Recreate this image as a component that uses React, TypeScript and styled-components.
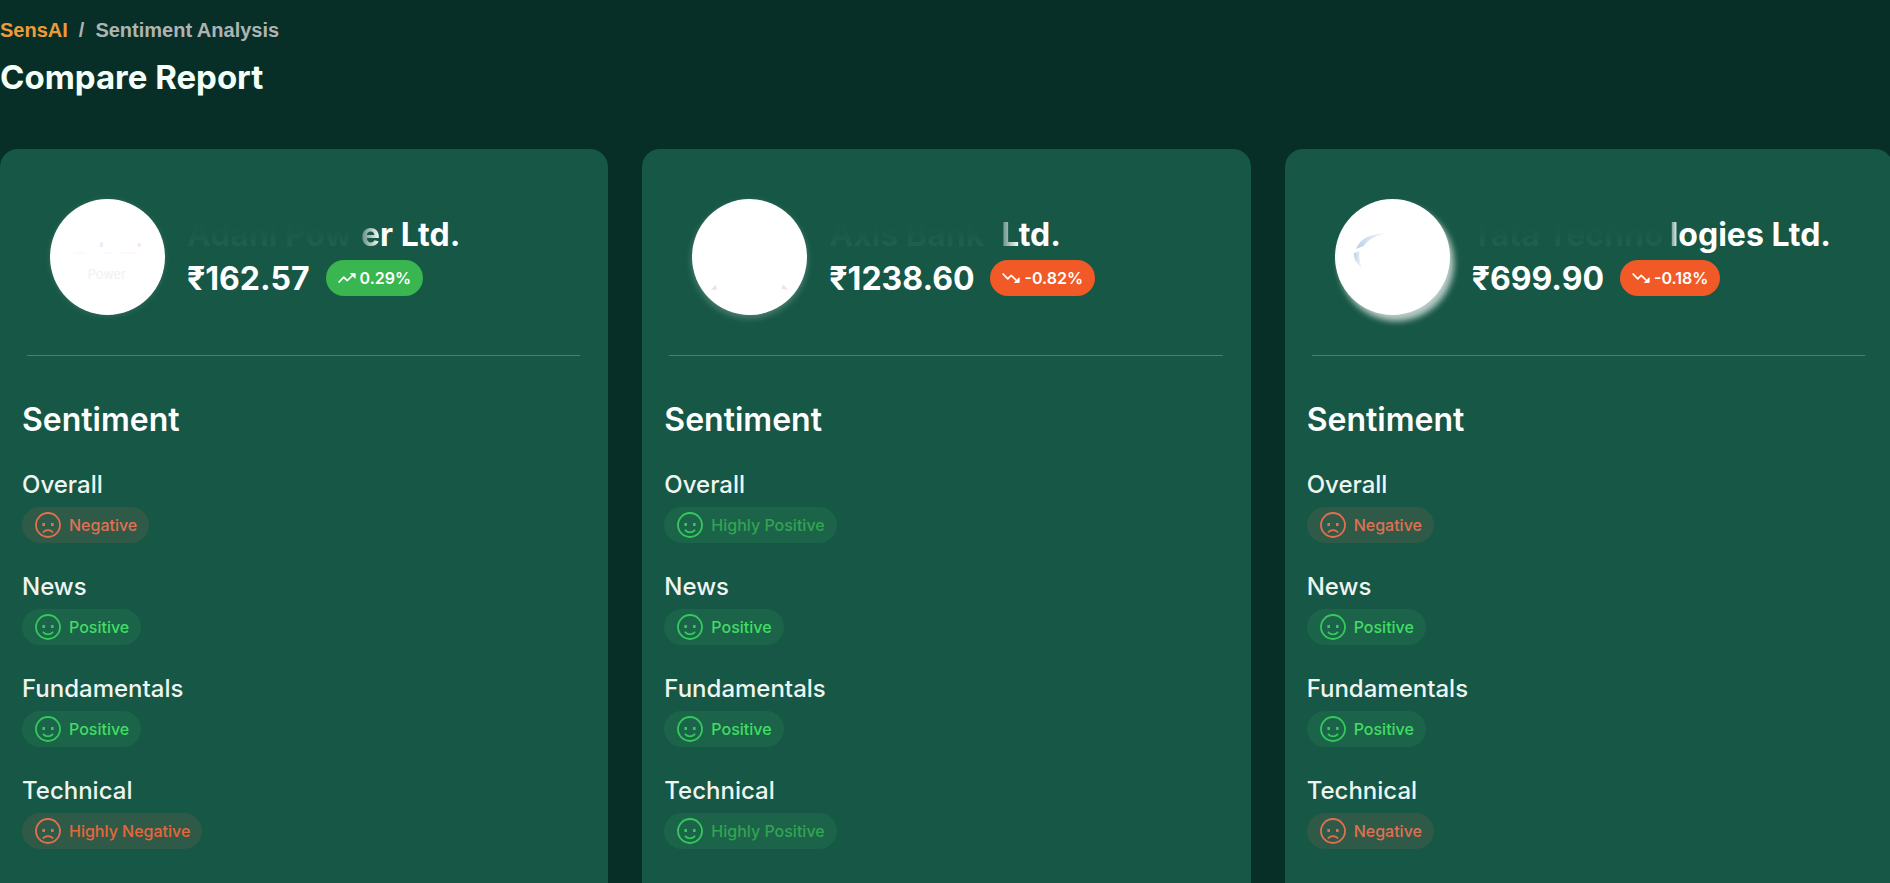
import React from "react";
import styled, { createGlobalStyle } from "styled-components";

const GlobalStyle = createGlobalStyle`
  *, *::before, *::after { box-sizing: border-box; }
  body {
    margin: 0;
    min-height: 100vh;
    background: #082f27;
    color: #ffffff;
    font-family: Inter, "Liberation Sans", sans-serif;
    overflow-x: hidden;
  }
  h1, h2, h3, p, dl, dd { margin: 0; }
`;

type Mood = "Highly Positive" | "Positive" | "Negative" | "Highly Negative";

const moodColors: Record<Mood, string> = {
  "Highly Positive": "#33a352",
  Positive: "#43dc64",
  Negative: "#df7153",
  "Highly Negative": "#e5673a",
};

const Page = styled.main`
  height: 100vh;
  overflow: hidden;
`;

const Breadcrumb = styled.nav`
  display: flex;
  gap: 11px;
  padding-top: 18px;
  font: bold 20px/24px "Liberation Sans", Arial, sans-serif;
  color: #aeb4b1;
`;

const Crumb = styled.a<{ $accent?: boolean }>`
  color: ${(p) => (p.$accent ? "#f09a38" : "inherit")};
  text-decoration: none;
`;

const Title = styled.h1`
  padding-top: 15px;
  font-size: 33px;
  font-weight: 700;
  line-height: 40px;
  color: #f3fff8;
`;

const Grid = styled.div`
  display: grid;
  grid-template-columns: repeat(3, minmax(0, 1fr));
  gap: 34px;
  margin: 52px -3px 0 0;
`;

const Card = styled.article`
  min-height: 760px;
  padding: 50px 28px 40px 22px;
  border-radius: 18px;
  background: #165745;
`;

const Header = styled.header`
  display: flex;
  align-items: center;
  gap: 22px;
  padding: 0 0 40px 28px;
  white-space: nowrap;
`;

const Logo = styled.div<{ $glow: string }>`
  flex: none;
  width: 115px;
  height: 116px;
  border-radius: 50%;
  background: #ffffff;
  box-shadow: ${(p) => p.$glow};
  overflow: hidden;

  svg { display: block; }
`;

const Name = styled.h2`
  font-size: 32px;
  font-weight: 700;
  line-height: 44px;
`;

const Faded = styled.span<{ $width: number }>`
  display: inline-block;
  width: ${(p) => p.$width}px;
  background: linear-gradient(rgba(255, 255, 255, 0.01) 40%, rgba(255, 255, 255, 0.06) 80%);
  background-clip: text;
  color: transparent;
`;

const Dim = styled.span`
  background: linear-gradient(90deg, rgba(255, 255, 255, 0.3), #ffffff);
  background-clip: text;
  color: transparent;
`;

const Quote = styled.div`
  display: flex;
  align-items: center;
  gap: 16px;
`;

const Price = styled.p`
  font-size: 32px;
  font-weight: 700;
  line-height: 44px;
`;

const Change = styled.span<{ $up: boolean }>`
  display: flex;
  align-items: center;
  gap: 4px;
  height: 36px;
  margin-bottom: 2px;
  padding: 0 12px;
  border-radius: 18px;
  background: ${(p) => (p.$up ? "#39b64f" : "#f15a27")};
  font-size: 16px;
  font-weight: 600;
`;

const Divider = styled.hr`
  height: 1px;
  margin: 0 0 0 5px;
  border: 0;
  background: #64756e;
`;

const SectionTitle = styled.h3`
  padding: 44px 0 30px;
  font-size: 32px;
  font-weight: 600;
  line-height: 40px;
`;

const Ratings = styled.dl`
  display: grid;
  gap: 29px;
`;

const Label = styled.dt`
  padding-bottom: 7px;
  font-size: 24px;
  font-weight: 500;
  line-height: 30px;
  color: #eef5f1;
`;

const Pill = styled.dd<{ $mood: Mood }>`
  display: flex;
  align-items: center;
  gap: 8px;
  width: max-content;
  height: 36px;
  padding: 0 12px 0 13px;
  border-radius: 18px;
  background: ${(p) => (p.$mood.endsWith("Positive") ? "#1b644a" : "#2f5a48")};
  color: ${(p) => moodColors[p.$mood]};
  font-size: 16px;
  font-weight: 500;
`;

const Face = ({ happy }: { happy: boolean }) => (
  <svg width="26" height="26" viewBox="0 0 26 26" fill="none" stroke={happy ? "#35c95c" : "#e1704f"} strokeWidth="1.8" strokeLinecap="round" aria-hidden="true">
    <circle cx="13" cy="13" r="12" />
    <path d={happy ? "M8.400 18.300c2.400 2.700 6.800 2.700 9.200 0" : "M8.400 20c2.400-2.600 6.800-2.600 9.200 0"} />
    <path d="M7.400 12.500h2.600M16 12.500h2.600" strokeWidth="2.800" strokeLinecap="butt" />
  </svg>
);

const Trend = ({ up }: { up: boolean }) => (
  <svg width="18" height="12" viewBox="0 0 18 12" fill="none" stroke="#ffffff" strokeWidth="1.700" strokeLinejoin="round" aria-hidden="true">
    {up ? (
      <>
        <path d="M.6 10.500L5.800 5.200l3.400 3.400L15 3" />
        <path d="M12.400 1.500h4.800v4.800z" fill="#ffffff" strokeWidth=".8" />
      </>
    ) : (
      <>
        <path d="M.6 1.500l5.200 5.300 3.400-3.400L15 9" />
        <path d="M12.400 10.500h4.800v-4.800z" fill="#ffffff" strokeWidth=".8" />
      </>
    )}
  </svg>
);

const logos: Record<string, React.ReactNode> = {
  adani: (
    <>
      <path d="M24 54h12M54 54h10M72 54h16" stroke="#fafafa" strokeWidth="2" />
      <path d="M52 43v5" stroke="#ecebf8" strokeWidth="3" />
      <circle cx="90" cy="46" r="2" fill="#fbe6ee" />
      <text x="38" y="80" fontSize="13" fill="#f1f1f1">Power</text>
    </>
  ),
  axis: <path d="M19 91l5-5 1 5zM97 91l-5-5-2 4z" fill="#f8dce5" />,
  tata: (
    <>
      <defs>
        <linearGradient id="arc" x1="0" x2="1">
          <stop offset="0" stopColor="#b9cfe8" />
          <stop offset="1" stopColor="#ffffff" />
        </linearGradient>
      </defs>
      <path d="M21 50c5-11 15-16 32-16-14 3-20 7-24 13z" fill="url(#arc)" />
      <path d="M19 54l6-2c-1 7 0 12 3 18-6-5-9-10-9-16z" fill="url(#arc)" />
    </>
  ),
};

type Stock = {
  logo: string;
  glow: string;
  faded: string;
  fadedWidth: number;
  dim: string;
  name: string;
  price: string;
  change: string;
  moods: Mood[];
};

const stocks: Stock[] = [
  {
    logo: "adani",
    glow: "0 1px 6px rgba(255, 255, 255, 0.12)",
    faded: "Adani Pow",
    fadedWidth: 174,
    dim: "e",
    name: "r Ltd.",
    price: "162.57",
    change: "0.29%",
    moods: ["Negative", "Positive", "Positive", "Highly Negative"],
  },
  {
    logo: "axis",
    glow: "0 3px 7px rgba(255, 255, 255, 0.25)",
    faded: "Axis Bank",
    fadedWidth: 172,
    dim: "L",
    name: "td.",
    price: "1238.60",
    change: "-0.82%",
    moods: ["Highly Positive", "Positive", "Positive", "Highly Positive"],
  },
  {
    logo: "tata",
    glow: "4px 6px 6px rgba(255, 255, 255, 0.7)",
    faded: "Tata Techno",
    fadedWidth: 198,
    dim: "l",
    name: "ogies Ltd.",
    price: "699.90",
    change: "-0.18%",
    moods: ["Negative", "Positive", "Positive", "Negative"],
  },
];

const topics = ["Overall", "News", "Fundamentals", "Technical"];

const StockCard = ({ stock }: { stock: Stock }) => {
  const up = !stock.change.startsWith("-");
  return (
    <Card>
      <Header>
        <Logo $glow={stock.glow}>
          <svg width="115" height="116" viewBox="0 0 116 116" aria-hidden="true">
            {logos[stock.logo]}
          </svg>
        </Logo>
        <div>
          <Name>
            <Faded $width={stock.fadedWidth}>{stock.faded}</Faded>
            <Dim>{stock.dim}</Dim>
            {stock.name}
          </Name>
          <Quote>
            <Price>₹{stock.price}</Price>
            <Change $up={up}>
              <Trend up={up} />
              {stock.change}
            </Change>
          </Quote>
        </div>
      </Header>
      <Divider />
      <SectionTitle>Sentiment</SectionTitle>
      <Ratings>
        {topics.map((topic, i) => (
          <div key={topic}>
            <Label>{topic}</Label>
            <Pill $mood={stock.moods[i]}>
              <Face happy={stock.moods[i].endsWith("Positive")} />
              {stock.moods[i]}
            </Pill>
          </div>
        ))}
      </Ratings>
    </Card>
  );
};

export default function App() {
  return (
    <Page>
      <GlobalStyle />
      <Breadcrumb aria-label="Breadcrumb">
        <Crumb $accent href="#sensai">SensAI</Crumb>
        <span>/</span>
        <Crumb href="#sentiment">Sentiment Analysis</Crumb>
      </Breadcrumb>
      <Title>Compare Report</Title>
      <Grid>
        {stocks.map((stock) => (
          <StockCard key={stock.logo} stock={stock} />
        ))}
      </Grid>
    </Page>
  );
}
